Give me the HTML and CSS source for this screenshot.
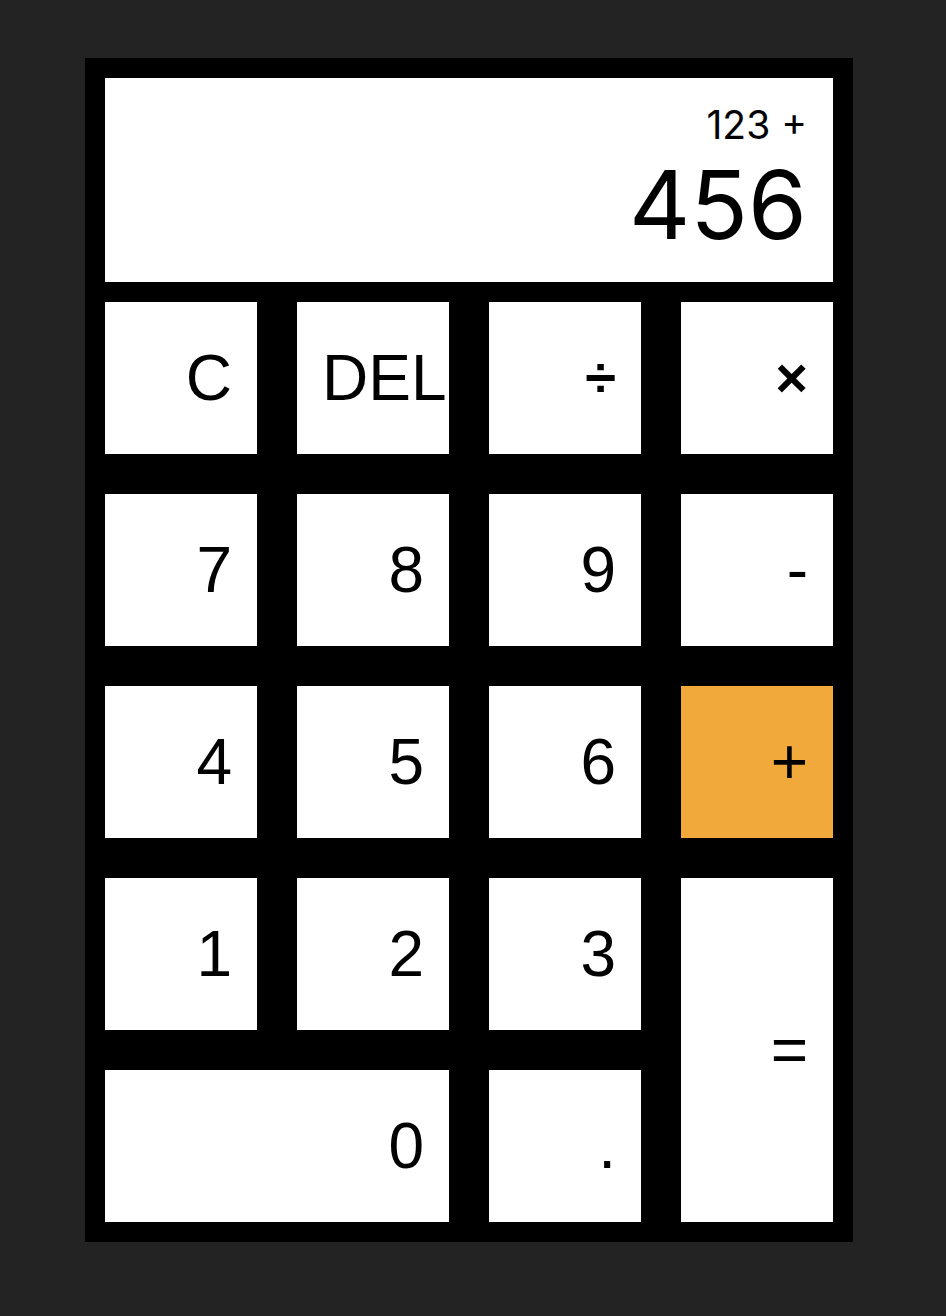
FILE: index.html
```html
<!DOCTYPE html>
<html>
<head>
<meta charset="utf-8">
<link rel="stylesheet" href="styles.css">
</head>
<body>
<div class="calc">
  <div class="display">
    <div class="prev">123 +</div>
    <div class="cur">456</div>
  </div>
  <div class="keys">
    <div class="key">C</div>
    <div class="key">DEL</div>
    <div class="key sym">÷</div>
    <div class="key sym">×</div>
    <div class="key">7</div>
    <div class="key">8</div>
    <div class="key">9</div>
    <div class="key">-</div>
    <div class="key">4</div>
    <div class="key">5</div>
    <div class="key">6</div>
    <div class="key op-active">+</div>
    <div class="key">1</div>
    <div class="key">2</div>
    <div class="key">3</div>
    <div class="key equals">=</div>
    <div class="key zero">0</div>
    <div class="key">.</div>
  </div>
</div>
</body>
</html>
```
FILE: styles.css
```css
html, body {
  margin: 0;
  padding: 0;
  background: #232323;
}
body {
  padding-top: 58px;
  font-family: "Liberation Sans", Arial, sans-serif;
}
.calc {
  width: 728px;
  margin: 0 0 0 85px;
  padding: 20px;
  background: #000;
}
.display {
  height: 204px;
  box-sizing: border-box;
  background: #fff;
  padding: 22px 26px 0 26px;
  text-align: right;
  color: #000;
  font-family: Inter, "Liberation Sans", sans-serif;
  font-weight: 400;
}
.prev {
  font-size: 39px;
  line-height: 50px;
}
.cur {
  font-size: 95px;
  line-height: 110px;
}
.keys {
  margin-top: 20px;
  display: grid;
  grid-template-columns: repeat(4, 152px);
  grid-auto-rows: 152px;
  gap: 40px;
}
.key {
  background: #fff;
  color: #000;
  font-size: 64px;
  line-height: 152px;
  text-align: right;
  padding: 0 25px;
  white-space: nowrap;
  overflow: visible;
}
.sym {
  font-weight: 700;
  font-size: 56px;
}
.op-active {
  background: #f2a93b;
}
.equals {
  grid-row: span 2;
  line-height: 344px;
}
.zero {
  grid-column: span 2;
}
```
